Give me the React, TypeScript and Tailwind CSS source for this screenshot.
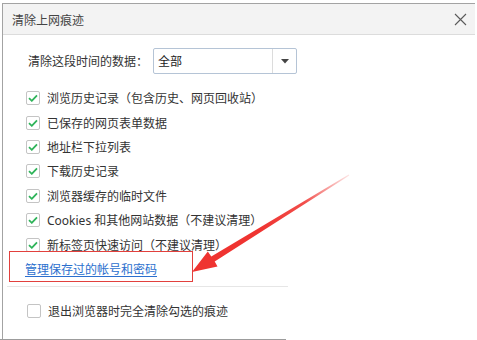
import React from "react";

function P({ c }: { c: string }) {
  return <span className="inline-block w-[12px] text-center">{c}</span>;
}

const rows: React.ReactNode[] = [
  <>
    浏览历史记录<P c="（" />包含历史、网页回收站<P c="）" />
  </>,
  "已保存的网页表单数据",
  "地址栏下拉列表",
  "下载历史记录",
  "浏览器缓存的临时文件",
  <>
    <span className="font-['Noto_Sans',sans-serif]">Cookies </span>和其他网站数据<P c="（" />不建议清理<P c="）" />
  </>,
  <>
    新标签页快速访问<P c="（" />不建议清理<P c="）" />
  </>,
];

function Check({ checked }: { checked: boolean }) {
  return (
    <span className="flex h-[14px] w-[14px] shrink-0 items-center justify-center rounded-[2px] border border-[#c4c4c4] bg-white">
      {checked && (
        <svg width="10" height="8" viewBox="0 0 10 8">
          <path d="M1 4.2 L3.8 6.8 L9 1.3" fill="none" stroke="#2fb45a" strokeWidth="1.8" />
        </svg>
      )}
    </span>
  );
}

export default function App() {
  return (
    <div
      lang="zh-CN"
      className="relative h-[340px] w-[477px] overflow-hidden bg-white font-['Noto_Sans_CJK_SC',sans-serif] text-[12px] text-[#333]"
    >
      <div className="ml-[2px] mt-[3px] flex h-[336px] w-[473px] flex-col border-l border-t border-[#a3a3a3]">
        <div className="flex h-[31px] shrink-0 items-center justify-between border-b border-[#dcdcdc] bg-[#f3f3f3] pl-[9px] pr-[8px]">
          <span className="pt-[2px] text-[12px] text-[#444]">清除上网痕迹</span>
          <svg width="13" height="13" viewBox="0 0 13 13" className="mt-[1px]">
            <path d="M1 1 L12 12 M12 1 L1 12" stroke="#5a5a5a" strokeWidth="1.1" />
          </svg>
        </div>
        <div className="flex w-[286px] flex-col">
          <div className="ml-[25px] mt-[13px] flex h-[26px] items-center">
            <span className="w-[125px] shrink-0 whitespace-nowrap">
              清除这段时间的数据<P c="：" />
            </span>
            <div className="flex h-[26px] w-[144px] shrink-0 items-center rounded-[2px] border border-[#b5c4d6] bg-white">
              <span className="flex-1 pl-[4px] text-[#222]">全部</span>
              <span className="flex h-full w-[24px] items-center justify-center border-l border-[#dcdcdc]">
                <svg width="8" height="5" viewBox="0 0 8 5">
                  <path d="M0 0 H8 L4 4.5 Z" fill="#444" />
                </svg>
              </span>
            </div>
          </div>
          <div className="ml-[23px] mt-[12px] flex flex-col">
            {rows.map((r, i) => (
              <div key={i} className="flex h-[24.4px] items-center gap-[7px]">
                <Check checked />
                <span className="whitespace-nowrap">{r}</span>
              </div>
            ))}
          </div>
          <div className="relative flex h-[24px] items-center pl-[22px]">
            <a className="text-[#2b6fce] underline underline-offset-2">管理保存过的帐号和密码</a>
          </div>
          <div className="ml-[4px] mt-[5px] h-px w-[281px] bg-[#e6e6e6]" />
          <div className="ml-[24px] mt-[12px] flex h-[24px] items-center gap-[7px]">
            <Check checked={false} />
            <span>退出浏览器时完全清除勾选的痕迹</span>
          </div>
        </div>
      </div>
      <div className="h-px w-[286px] bg-[#9c9c9c]" />
      <div className="absolute left-[9px] top-[251px] h-[31px] w-[184px] border border-[#e2403d]" />
      <svg className="absolute left-0 top-0" width="477" height="340" viewBox="0 0 477 340">
        <defs>
          <linearGradient id="g" x1="349" y1="175" x2="260" y2="230" gradientUnits="userSpaceOnUse">
            <stop offset="0" stopColor="#f04b48" stopOpacity="0.15" />
            <stop offset="0.5" stopColor="#f03a36" stopOpacity="0.9" />
            <stop offset="1" stopColor="#ef3431" stopOpacity="1" />
          </linearGradient>
        </defs>
        <polygon
          points="349.3,175.4 348.7,174.6 211.3,256.4 207.8,251.6 192,272 217.5,266.5 214.7,261.4"
          fill="url(#g)"
        />
      </svg>
    </div>
  );
}
